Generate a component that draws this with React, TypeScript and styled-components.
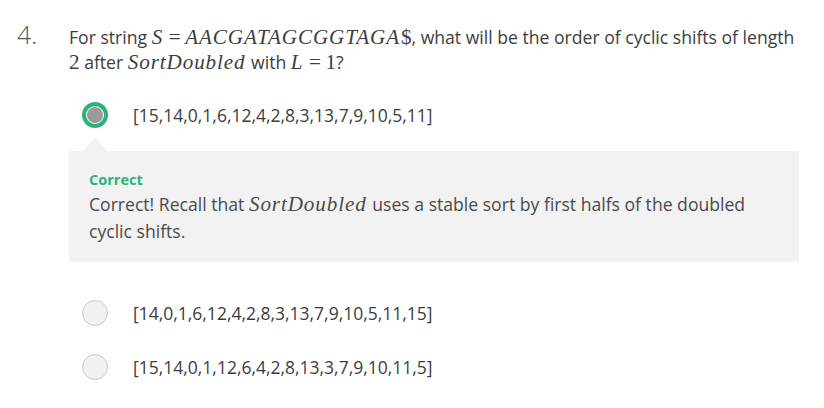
import React from "react";
import styled, { createGlobalStyle } from "styled-components";

const Global = createGlobalStyle`
  html, body { margin: 0; padding: 0; background: #ffffff; }
  body { font-family: "Open Sans", "Liberation Sans", sans-serif; color: #3d3d3d; }
`;

const Page = styled.div`
  width: 824px;
  height: 408px;
  padding-top: 25px;
  box-sizing: border-box;
  overflow: hidden;
`;

const QuestionRow = styled.div`
  display: flex;
  align-items: flex-start;
`;

const Number = styled.div`
  width: 52px;
  padding-left: 17px;
  font-size: 25px;
  font-weight: 300;
  line-height: 25px;
  color: #555;
  margin-top: -3px;
`;

const Body = styled.div`
  flex: 1;
  display: flex;
  flex-direction: column;
  padding-right: 25px;
`;

const Prompt = styled.div`
  font-size: 17.6px;
  line-height: 25px;
  color: #3d3d3d;
  padding-right: 4px;
`;

const MathText = styled.span<{ $roman?: boolean }>`
  display: inline-block;
  font-family: "Liberation Serif", "DejaVu Serif", serif;
  font-style: ${(p) => (p.$roman ? "normal" : "italic")};
  font-size: 1.2em;
  letter-spacing: ${(p) => (p.$roman ? "0" : "0.9px")};
  line-height: 1;
  padding-right: ${(p) => (p.$roman ? "0" : "1px")};
`;

const Options = styled.div`
  display: flex;
  flex-direction: column;
  margin-top: 27px;
`;

const OptionRow = styled.div<{ $gap?: number }>`
  display: flex;
  align-items: center;
  height: 26px;
  padding-left: 13px;
  margin-top: ${(p) => p.$gap ?? 0}px;
`;

const Radio = styled.span<{ $checked?: boolean }>`
  width: 26px;
  height: 26px;
  box-sizing: border-box;
  border-radius: 50%;
  flex: none;
  display: flex;
  align-items: center;
  justify-content: center;
  background: ${(p) => (p.$checked ? "#ffffff" : "#f1f1f1")};
  border: ${(p) => (p.$checked ? "4px solid #2bb37a" : "1px solid #c8c8c8")};
`;

const RadioDot = styled.span`
  width: 16px;
  height: 16px;
  border-radius: 50%;
  background: #9b9b9b;
`;

const OptionText = styled.span`
  margin-left: 25px;
  font-size: 17.5px;
  color: #3d3d3d;
`;

const Feedback = styled.div`
  position: relative;
  margin-top: 23px;
  background: #f2f2f2;
  padding: 19px 20px 17px 20px;
  &::before {
    content: "";
    position: absolute;
    left: 14px;
    top: -14px;
    border-left: 12px solid transparent;
    border-right: 12px solid transparent;
    border-bottom: 14px solid #f2f2f2;
  }
`;

const FeedbackTitle = styled.div`
  font-size: 14.5px;
  font-weight: 700;
  color: #2bb37a;
  line-height: 20px;
`;

const FeedbackText = styled.div`
  font-size: 17.6px;
  line-height: 27px;
  color: #4a4a4a;
  margin-top: 1px;
`;

const options = [
  "[15,14,0,1,6,12,4,2,8,3,13,7,9,10,5,11]",
  "[14,0,1,6,12,4,2,8,3,13,7,9,10,5,11,15]",
  "[15,14,0,1,12,6,4,2,8,13,3,7,9,10,11,5]",
];

export default function App() {
  return (
    <Page>
      <Global />
      <QuestionRow>
        <Number>4.</Number>
        <Body>
          <Prompt>
            For string <MathText>S</MathText> <MathText $roman>=</MathText>{" "}
            <MathText>AACGATAGCGGTAGA</MathText>
            <MathText $roman>$</MathText>, what will be the order of cyclic shifts of length{" "}
            <MathText $roman>2</MathText> after <MathText>SortDoubled</MathText> with{" "}
            <MathText>L</MathText> <MathText $roman>=</MathText> <MathText $roman>1</MathText>?
          </Prompt>
          <Options>
            <OptionRow>
              <Radio $checked>
                <RadioDot />
              </Radio>
              <OptionText>{options[0]}</OptionText>
            </OptionRow>
            <Feedback>
              <FeedbackTitle>Correct</FeedbackTitle>
              <FeedbackText>
                Correct! Recall that <MathText>SortDoubled</MathText> uses a stable sort by first
                halfs of the doubled cyclic shifts.
              </FeedbackText>
            </Feedback>
            <OptionRow $gap={38}>
              <Radio />
              <OptionText>{options[1]}</OptionText>
            </OptionRow>
            <OptionRow $gap={28}>
              <Radio />
              <OptionText>{options[2]}</OptionText>
            </OptionRow>
          </Options>
        </Body>
      </QuestionRow>
    </Page>
  );
}
